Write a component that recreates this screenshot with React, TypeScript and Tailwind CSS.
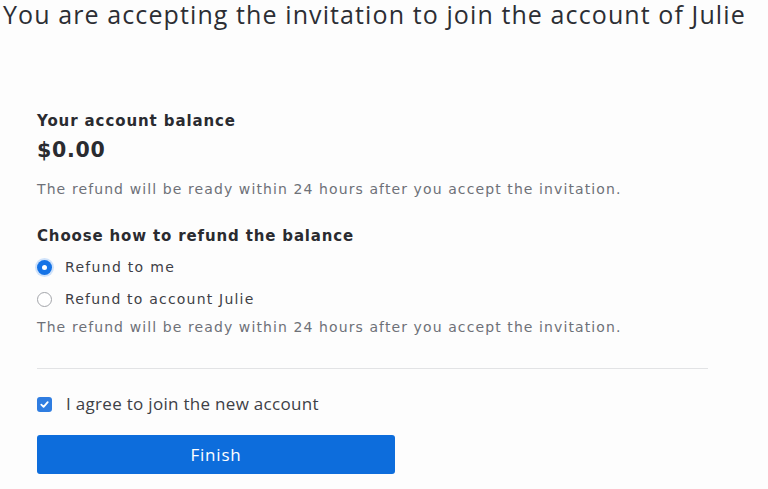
export default function App() {
  const body = { fontFamily: '"DejaVu Sans", "Noto Sans", sans-serif' };
  const open = { fontFamily: '"Open Sans", sans-serif' };
  return (
    <div className="w-[768px] h-[489px] bg-[#fdfdfd] overflow-hidden">
      <h1
        className="pl-[3px] text-[25px] leading-[28px] tracking-[1.1px] text-[#2c2e34]"
        style={open}
      >
        You are accepting the invitation to join the account of Julie
      </h1>
      <div className="pl-[37px] pt-[83px] w-[708px]" style={body}>
        <div className="text-[15px] leading-[20px] tracking-[0.9px] font-bold text-[#2a2b30]">
          Your account balance
        </div>
        <div className="mt-[7px] text-[20.5px] leading-[24px] tracking-[0.7px] font-bold text-[#2a2b30]">
          $0.00
        </div>
        <p className="mt-[18px] text-[14px] leading-[18px] tracking-[1.1px] text-[#6e7178]">
          The refund will be ready within 24 hours after you accept the invitation.
        </p>
        <div className="mt-[28px] text-[15px] leading-[20px] tracking-[0.85px] font-bold text-[#2a2b30]">
          Choose how to refund the balance
        </div>
        <div className="mt-[11px] flex flex-col gap-[12px]">
          <label className="flex items-center gap-[13px] text-[14px] leading-[20px] tracking-[1.3px] text-[#3e4046]">
            <span className="w-[15px] h-[15px] rounded-full bg-[#1573e6] ring-2 ring-[#cfe2fa] flex items-center justify-center">
              <span className="w-[5px] h-[5px] rounded-full bg-white" />
            </span>
            Refund to me
          </label>
          <label className="flex items-center gap-[13px] text-[14px] leading-[20px] tracking-[1.2px] text-[#3e4046]">
            <span className="w-[15px] h-[15px] rounded-full border border-[#a3a5aa] bg-white" />
            Refund to account Julie
          </label>
        </div>
        <p className="mt-[9px] text-[14px] leading-[18px] tracking-[1.1px] text-[#6e7178]">
          The refund will be ready within 24 hours after you accept the invitation.
        </p>
        <div className="mt-[32px] h-px bg-[#e2e3e5] w-[671px]" />
        <label
          className="mt-[25px] flex items-center gap-[14px] text-[17px] leading-[20px] tracking-[0.3px] text-[#3e4046]"
          style={open}
        >
          <span className="w-[15px] h-[15px] rounded-[3px] bg-[#2f7de1] flex items-center justify-center">
            <svg viewBox="0 0 12 12" className="w-[11px] h-[11px]" fill="none" stroke="white" strokeWidth="2" strokeLinecap="round" strokeLinejoin="round">
              <path d="M2.5 6.2 5 8.6 9.5 3.5" />
            </svg>
          </span>
          I agree to join the new account
        </label>
        <button
          className="mt-[21px] w-[358px] h-[39px] rounded-[3px] bg-[#0d6ddc] text-white text-[17px] tracking-[0.8px]"
          style={open}
        >
          Finish
        </button>
      </div>
    </div>
  );
}
